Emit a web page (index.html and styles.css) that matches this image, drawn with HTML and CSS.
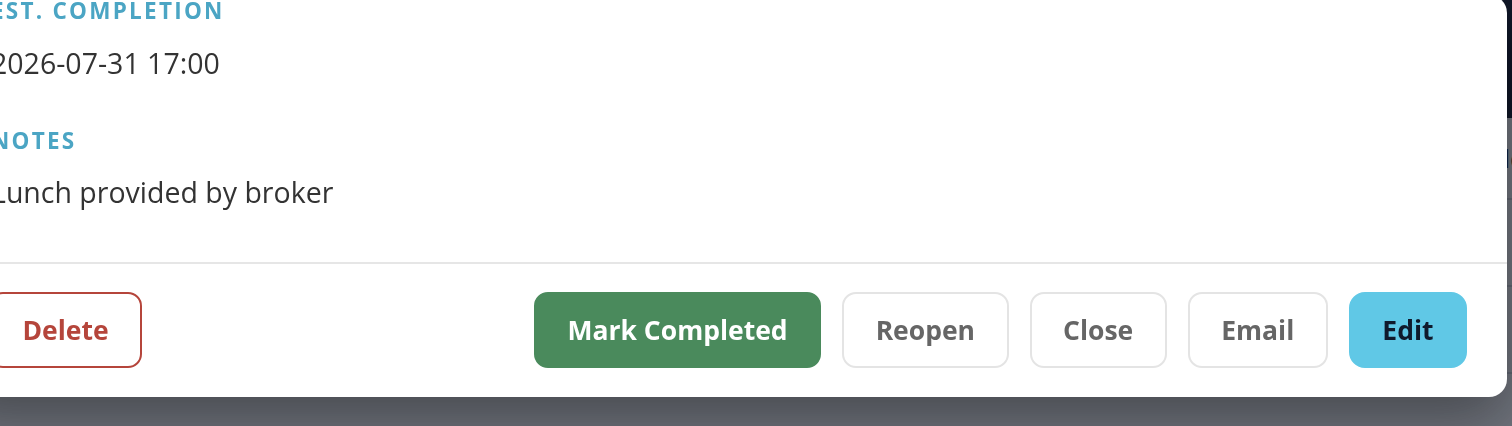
FILE: index.html
```html
<!DOCTYPE html>
<html lang="en">
<head>
<meta charset="utf-8">
<title>Task details</title>
<link rel="stylesheet" href="styles.css">
</head>
<body>
<div class="page">
  <header class="page-header"></header>
  <div class="page-toolbar"><span class="toolbar-text">Add</span></div>
  <div class="page-row"></div>
  <div class="page-row"></div>
</div>

<div class="backdrop">
  <div class="modal" role="dialog" aria-modal="true">
    <div class="modal-body">
      <div class="field">
        <div class="field-label">Est. Completion</div>
        <div class="field-value">2026-07-31 17:00</div>
      </div>
      <div class="field">
        <div class="field-label">Notes</div>
        <div class="field-value">Lunch provided by broker</div>
      </div>
    </div>
    <div class="modal-footer">
      <button class="btn btn-danger-outline" type="button">Delete</button>
      <div class="footer-actions">
        <button class="btn btn-success" type="button">Mark Completed</button>
        <button class="btn btn-light" type="button">Reopen</button>
        <button class="btn btn-light" type="button">Close</button>
        <button class="btn btn-light" type="button">Email</button>
        <button class="btn btn-primary" type="button">Edit</button>
      </div>
    </div>
  </div>
</div>
</body>
</html>
```
FILE: styles.css
```css
html, body {
  margin: 0;
  padding: 0;
  overflow: hidden;
  height: 100%;
}

body {
  font-family: "Open Sans", "Liberation Sans", sans-serif;
  background: #ffffff;
  color: #333333;
}

.page {
  width: 1530px;
}

.page-header {
  height: 118px;
  background: #0f172a;
}

.page-toolbar {
  height: 82px;
  display: flex;
  align-items: center;
  justify-content: flex-end;
  padding-right: 4px;
  box-sizing: border-box;
  border-bottom: 2px solid #d8dbe0;
}

.toolbar-text {
  font-size: 26px;
  color: #111827;
}

.page-row {
  height: 85px;
  border-bottom: 2px solid #d8dbe0;
}

.backdrop {
  position: fixed;
  inset: 0;
  background: rgba(17, 24, 39, 0.6);
}

.modal {
  position: absolute;
  left: -51px;
  right: 5px;
  bottom: 29px;
  background: #ffffff;
  border-radius: 18px;
  box-shadow: 0 22px 60px rgba(0, 0, 0, 0.38);
}

.modal-body {
  display: flex;
  flex-direction: column;
  gap: 40px;
  padding: 0 40px 48px 42px;
}

.field-label {
  font-size: 22.5px;
  font-weight: 700;
  line-height: 31.5px;
  letter-spacing: 0.1em;
  text-transform: uppercase;
  color: #4ba5c4;
  margin-bottom: 16px;
}

.field-value {
  font-size: 28.5px;
  line-height: 1.47;
  color: #333333;
}

.modal-footer {
  display: flex;
  justify-content: space-between;
  align-items: center;
  border-top: 2px solid #e6e6e6;
  padding: 28px 40px 29px 40px;
}

.footer-actions {
  display: flex;
  gap: 21px;
}

.btn {
  font-family: "Open Sans", "Liberation Sans", sans-serif;
  font-size: 26.5px;
  font-weight: 700;
  height: 76px;
  padding: 0 31.5px;
  border-radius: 14px;
  border: 2px solid transparent;
  background: #ffffff;
  cursor: pointer;
  box-sizing: border-box;
  line-height: 1;
}

.btn-danger-outline {
  border-color: #b5453b;
  color: #b5453b;
}

.btn-success {
  background: #4a8a5c;
  border-color: #4a8a5c;
  color: #ffffff;
}

.btn-light {
  border-color: #e4e4e4;
  color: #666666;
}

.btn-primary {
  background: #60c8e6;
  border-color: #60c8e6;
  color: #0f1a2c;
  border-radius: 16px;
}
```
